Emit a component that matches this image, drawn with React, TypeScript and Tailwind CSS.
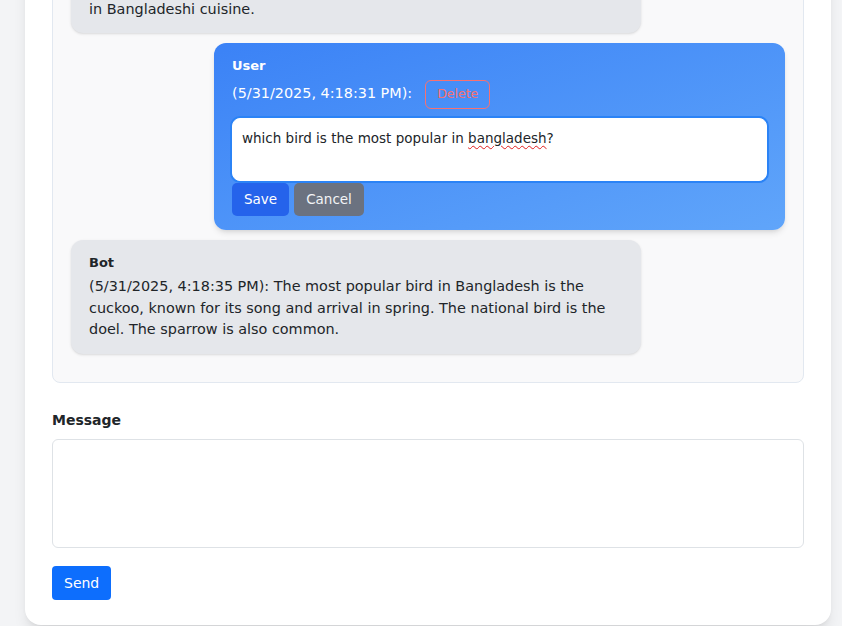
import React from 'react';

type Msg = {
  id: number;
  role: 'User' | 'Bot';
  time: string;
  text: string;
  editing?: boolean;
};

const messages: Msg[] = [
  {
    id: 1,
    role: 'Bot',
    time: '5/31/2025, 4:17:52 PM',
    text: 'Bangladeshi food is rich and flavourful. Rice and fish are the staples, and dishes like hilsa curry, biryani and bhuna khichuri are loved everywhere. Lentils, vegetables and mustard oil are part of most meals, and sweets like rasgulla are very common\nin Bangladeshi cuisine.',
  },
  {
    id: 2,
    role: 'User',
    time: '5/31/2025, 4:18:31 PM',
    text: 'which bird is the most popular in bangladesh?',
    editing: true,
  },
  {
    id: 3,
    role: 'Bot',
    time: '5/31/2025, 4:18:35 PM',
    text: 'The most popular bird in Bangladesh is the cuckoo, known for its song and arrival in spring. The national bird is the doel. The sparrow is also common.',
  },
];

function BotBubble({ msg }: { msg: Msg }) {
  return (
    <div className="mb-[10px] w-[570px] rounded-xl bg-[#e5e7eb] px-[18px] py-[13px] shadow-sm">
      <div className="mb-1 text-[13px] leading-[19.5px] font-bold text-[#212529]">{msg.role}</div>
      <div className="text-[14.4px] leading-[21.6px] whitespace-pre-line text-[#212529]">
        ({msg.time}): {msg.text}
      </div>
    </div>
  );
}

function UserEditBubble({ msg }: { msg: Msg }) {
  return (
    <div className="mb-[10px] ml-auto w-[571px] rounded-xl bg-linear-to-br from-[#3b82f6] to-[#60a5fa] px-[18px] pt-[13px] pb-[14px] text-white shadow-md">
      <div className="mb-1 text-[13px] leading-[19.5px] font-bold">{msg.role}</div>
      <div className="flex h-[29px] items-center">
        <span className="text-[14.4px]">({msg.time}):</span>
        <button className="ml-[13px] h-[29px] rounded-md border border-[#f87171] px-[11px] text-[12.5px] text-[#f87171]">
          Delete
        </button>
      </div>
      <div className="mt-[9px] h-[63px] rounded-lg border border-white bg-white px-[9px] py-[9px] text-[13.5px] leading-[20px] text-[#212529] ring-2 ring-[#2b83f6]">
        which bird is the most popular in{' '}
        <span className="underline decoration-[#e11d1d] decoration-wavy decoration-1 underline-offset-2">bangladesh</span>?
      </div>
      <div className="mt-[2px] flex gap-[5px]">
        <button className="h-[33px] rounded-[5px] bg-[#2563eb] px-3 text-[13.5px] text-white">Save</button>
        <button className="h-[33px] rounded-[5px] bg-[#6b7280] px-3 text-[13.5px] text-[#f3f4f6]">Cancel</button>
      </div>
    </div>
  );
}

export default function App() {
  return (
    <div
      className="flex h-[626px] flex-col justify-end overflow-hidden bg-[#f3f4f6] pb-px"
      style={{ fontFamily: "'DejaVu Sans', sans-serif" }}
    >
      <div className="mr-[11px] ml-[25px] shrink-0 rounded-2xl bg-white px-[27px] pt-6 pb-[25px] shadow-lg">
        {/* Chat history */}
        <div className="rounded-lg border border-[#e2e8f0] bg-[#f9f9fa] p-[18px]">
          {messages.map((m) =>
            m.editing ? <UserEditBubble key={m.id} msg={m} /> : <BotBubble key={m.id} msg={m} />
          )}
        </div>

        {/* Message form */}
        <label className="mt-[27px] mb-2 block text-[14px] leading-[21px] font-bold text-[#212529]">Message</label>
        <div className="h-[109px] rounded-md border border-[#dee2e6] bg-white" />
        <button className="mt-[18px] h-[34px] rounded-[4px] bg-[#0d6efd] px-3 text-[14px] text-white">Send</button>
      </div>
    </div>
  );
}
